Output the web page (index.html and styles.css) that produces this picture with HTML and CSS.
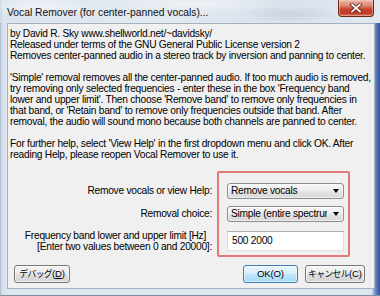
FILE: index.html
```html
<!DOCTYPE html>
<html>
<head>
<meta charset="utf-8">
<title>Vocal Remover</title>
<link rel="stylesheet" href="styles.css">
</head>
<body>
<div class="window">
  <div class="titlebar">
    <span class="title">Vocal Remover (for center-panned vocals)...</span>
    <div class="close">
      <svg width="14" height="10" viewBox="0 0 14 10">
        <path d="M3 1.5 L11 8.5 M11 1.5 L3 8.5" stroke="#5a1a10" stroke-width="3.4" stroke-linecap="square"/>
        <path d="M3 1.5 L11 8.5 M11 1.5 L3 8.5" stroke="#ffffff" stroke-width="1.8" stroke-linecap="square"/>
      </svg>
    </div>
  </div>
  <div class="frame">
    <div class="client">
      <p class="para">by David R. Sky www.shellworld.net/~davidsky/<br>Released under terms of the GNU General Public License version 2<br>Removes center-panned audio in a stereo track by inversion and panning to center.</p>
      <p class="para">'Simple' removal removes all the center-panned audio. If too much audio is removed,<br>try removing only selected frequencies - enter these in the box 'Frequency band<br>lower and upper limit'. Then choose 'Remove band' to remove only frequencies in<br>that band, or 'Retain band' to remove only frequencies outside that band. After<br>removal, the audio will sound mono because both channels are panned to center.</p>
      <p class="para">For further help, select 'View Help' in the first dropdown menu and click OK. After<br>reading Help, please reopen Vocal Remover to use it.</p>
      <div class="form">
        <div class="labels">
          <div class="label row1">Remove vocals or view Help:</div>
          <div class="label row2">Removal choice:</div>
          <div class="label row3"><span class="l3a">Frequency band lower and upper limit [Hz]</span><span class="l3b">[Enter two values between 0 and 20000]:</span></div>
        </div>
        <div class="highlight">
          <div class="select row1"><span class="sel-text">Remove vocals</span><i class="arrow"></i></div>
          <div class="select row2"><span class="sel-text">Simple (entire spectrum)</span><i class="arrow"></i></div>
          <div class="input row3">500 2000</div>
        </div>
      </div>
      <div class="buttons">
        <div class="btn btn-debug"><span class="kana">デバッグ</span>(<u>D</u>)</div>
        <div class="spacer"></div>
        <div class="btn btn-ok default">OK(O)</div>
        <div class="btn btn-cancel"><span class="kana">キャンセル</span>(C)</div>
      </div>
    </div>
  </div>
</div>
</body>
</html>
```

FILE: styles.css
```css
* { box-sizing: border-box; }
html, body { margin: 0; padding: 0; }
body {
  width: 380px;
  height: 296px;
  overflow: hidden;
  background: #dfe6ee;
  font-family: "Liberation Sans", Arial, sans-serif;
  color: #000;
}
.window {
  width: 380px;
  height: 296px;
  display: flex;
  flex-direction: column;
}
.titlebar {
  height: 23px;
  flex: none;
  display: flex;
  align-items: flex-start;
  padding-left: 7px;
  background:
    radial-gradient(ellipse 60px 10px at 40px 6px, rgba(255,255,255,0.55), rgba(255,255,255,0)),
    radial-gradient(ellipse 80px 9px at 200px 4px, rgba(255,255,255,0.5), rgba(255,255,255,0)),
    radial-gradient(ellipse 50px 8px at 290px 14px, rgba(170,185,200,0.35), rgba(170,185,200,0)),
    linear-gradient(to right, #c9d6e4 0, #dbe4ee 3px, #e3e9f0 40%, #d9e2ec 75%, #e1e8f0 100%);
}
.title {
  font-size: 10.3px;
  line-height: 14px;
  margin-top: 6px;
  color: #111;
  white-space: nowrap;
}
.close {
  margin-left: auto;
  margin-right: 6px;
  width: 36px;
  height: 17px;
  border: 1px solid #6e2418;
  border-top: none;
  border-radius: 0 0 4px 4px;
  background: linear-gradient(#eeb2a4 0%, #dc8a76 35%, #c8452d 55%, #c03a25 80%, #d76a50 100%);
  box-shadow: inset 0 0 0 1px rgba(255,220,210,0.45);
  display: flex;
  align-items: center;
  justify-content: center;
}
.close svg { display: block; }
.frame {
  flex: 1;
  display: flex;
  padding: 0 8px 6px 7px;
  background:
    linear-gradient(to right, rgba(0,0,0,0) 372px, #aabde0 373px, #5d7fc0 376px, #34539c 380px),
    linear-gradient(to right, #a9bad0 0, #d5dfea 2px, #dde5ee 7px, #dde5ee 100%);
  border-bottom: 1px solid #7d8ea4;
}
.client {
  flex: 1;
  display: flex;
  flex-direction: column;
  background: #f0f0f0;
  border: 1px solid #a3b1c2;
  padding: 4px 3px 0 2px;
}
.para {
  margin: 0 0 11px 0;
  font-size: 10.2px;
  letter-spacing: -0.25px;
  line-height: 11px;
  white-space: nowrap;
}
.form {
  display: flex;
  align-items: flex-start;
  font-size: 10.2px;
  letter-spacing: -0.25px;
}
.labels {
  width: 202px;
  padding-top: 12px;
  display: flex;
  flex-direction: column;
  text-align: right;
  white-space: nowrap;
}
.label.row1 { height: 16px; line-height: 16px; }
.label.row2 { height: 16px; line-height: 16px; margin-top: 7px; }
.label.row3 { margin-top: 8px; display: flex; flex-direction: column; line-height: 11px; }
.l3a { padding-right: 6px; }
.highlight {
  margin-left: 5px;
  width: 133px;
  border: 2px solid #e27a78;
  border-radius: 2px;
  padding: 10px 4px 4px 8px;
  display: flex;
  flex-direction: column;
}
.select {
  height: 16px;
  border: 1px solid #8d8d8d;
  border-radius: 3px;
  background: linear-gradient(#f6f6f6 0%, #eeeeee 45%, #e2e2e2 55%, #d9d9d9 100%);
  box-shadow: inset 0 0 0 1px rgba(255,255,255,0.55);
  display: flex;
  align-items: center;
  padding-left: 3px;
  position: relative;
}
.select.row2 { margin-top: 7px; }
.sel-text {
  display: block;
  width: 96px;
  overflow: hidden;
  white-space: nowrap;
  line-height: 14px;
}
.arrow {
  display: block;
  margin-left: auto;
  margin-right: 4px;
  width: 0;
  height: 0;
  border-top: 4px solid #000;
  border-left: 3.5px solid transparent;
  border-right: 3.5px solid transparent;
}
.input {
  margin-top: 9px;
  height: 20px;
  background: #fff;
  border: 1px solid #dbdfe6;
  border-top-color: #abadb3;
  padding-left: 4px;
  line-height: 18px;
  white-space: nowrap;
}
.buttons {
  display: flex;
  margin-top: 8px;
  padding: 0 6px 0 4px;
}
.spacer { flex: 1; }
.btn {
  height: 18px;
  border: 1px solid #777;
  border-radius: 3px;
  background: linear-gradient(#f4f4f4 0%, #ececec 45%, #dedede 55%, #d3d3d3 100%);
  box-shadow: inset 0 0 0 1px rgba(255,255,255,0.6);
  display: flex;
  align-items: center;
  justify-content: center;
  font-family: "Liberation Sans", "Noto Sans CJK JP", sans-serif;
  font-size: 9.6px;
  letter-spacing: -0.2px;
  white-space: nowrap;
  line-height: 14px;
}
.kana { font-size: 8.8px; letter-spacing: -0.6px; }
.btn-debug { width: 56px; }
.btn-ok { width: 55px; }
.btn-cancel { width: 60px; margin-left: 7px; }
.default {
  border-color: #3c7fb1;
  background: linear-gradient(#eaf6fd 0%, #d9f0fc 45%, #bee6fd 55%, #a7d9f5 100%);
  box-shadow: inset 0 0 0 1px rgba(255,255,255,0.5);
}
```
